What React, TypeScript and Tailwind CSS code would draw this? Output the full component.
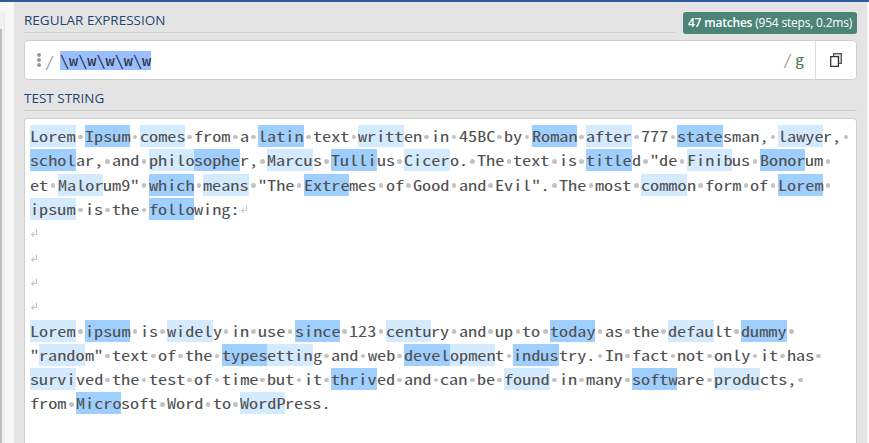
const CELL = 9.12;

// [..] marks a light match and {..} marks a dark match; ~ is a line break mark.
const lines: string[] = [
  '[Lorem] {Ipsum} [comes] from a {latin} text [writt]en in 45BC by {Roman} [after] 777 {state}sman, [lawye]r, ',
  '{schol}ar, and [philo]{sophe}r, [Marcu]s {Tulli}us [Cicer]o. The text is {title}d "de [Finib]us {Bonor}um ',
  'et [Malor]um9" {which} [means] "The {Extre}mes of Good and Evil". The most [commo]n form of {Lorem} ',
  '[ipsum] is the {follo}wing:~',
  '~',
  '~',
  '~',
  '~',
  '[Lorem] {ipsum} is [widel]y in use {since} 123 [centu]ry and up to {today} as the [defau]lt {dummy} ',
  '"[rando]m" text of the {types}[ettin]g and web {devel}[opmen]t {indus}try. In fact not only it has ',
  '[survi]ved the test of time but it {thriv}ed and can be [found] in many {softw}are [produ]cts, ',
  'from {Micro}soft Word to [WordP]ress.',
];

// The face is half an em wide, so the glyphs are widened to fill a cell.
function Wide({ children }: { children: string }) {
  return <span className="inline-block origin-left scale-x-[1.258]">{children}</span>;
}

function Segment({ token }: { token: string }) {
  if (token === ' ') {
    return (
      <span className="flex h-[22px] shrink-0 items-center justify-center pt-[2px]" style={{ width: CELL }}>
        <span className="size-[4.6px] rounded-full bg-[#c2c2c2]" />
      </span>
    );
  }
  if (token === '~') {
    return (
      <svg className="mt-[7px] ml-px h-[9px] w-[7px]" viewBox="0 0 7 9" fill="none">
        <path d="M5.5 0.5V5.5H0.5" stroke="#a9cdda" />
        <path d="M2.8 3L0.5 5.5L2.8 8" stroke="#c4c4c4" />
      </svg>
    );
  }
  const light = token[0] === '[';
  const dark = token[0] === '{';
  const text = light || dark ? token.slice(1, -1) : token;
  const fill = light ? 'bg-[#d4eaff]' : dark ? 'bg-[#9fcfff]' : '';
  return (
    <span className={`h-[22px] shrink-0 leading-[21px] ${fill}`} style={{ width: text.length * CELL }}>
      <Wide>{text}</Wide>
    </span>
  );
}

function Row({ line }: { line: string }) {
  const tokens = line.match(/\[[^\]]+\]|\{[^}]+\}| |~|[^[{ ~]+/g) ?? [];
  return (
    <div className="flex h-[24.32px] whitespace-pre">
      {tokens.map((token, i) => (
        <Segment key={i} token={token} />
      ))}
    </div>
  );
}

const mono = "font-['Noto_Sans_Mono_CJK_SC','Liberation_Mono',monospace] text-[14.5px]";

export default function App() {
  return (
    <div className="flex h-[443px] w-[869px] flex-col overflow-hidden bg-[#f7f7f7] font-['Open_Sans',sans-serif]">
      <div className="h-[2px] shrink-0 bg-[#2c5b9b]" />
      <div className="flex min-h-0 flex-1">
        <aside className="w-[14px] shrink-0 pt-[10px]">
          <div className="h-full w-[5px] rounded-tr-[4px] border-r border-[#e8e8e8] bg-[#f0f0f0] pt-[17px]">
            <div className="h-full w-[2px] bg-[#bdbdbd]" />
          </div>
        </aside>
        <main className="flex w-[853px] shrink-0 flex-col bg-[#e4e4e4] pr-[10px] pl-[10px]">
          <div className="flex h-[38px] shrink-0 justify-between">
            <h2 className="h-[31px] w-[651px] border-b border-[#cfcfcf] text-[13.5px] leading-[37px] font-medium text-[#24456f]">
              REGULAR EXPRESSION
            </h2>
            <div className="mt-[10px] flex h-[22px] w-[174px] items-center justify-center rounded-[3px] bg-[#4c8577] text-[12px] tracking-[-0.2px] whitespace-pre text-white">
              <span className="font-semibold">47 matches</span> (954 steps, 0.2ms)
            </div>
          </div>
          <section className="flex h-[40px] shrink-0 rounded-[4px] border border-[#cfcfcf] bg-white">
            <div className="flex flex-1 items-center">
              <div className="ml-[12px] flex flex-col gap-px">
                <span className="size-[4px] rounded-full bg-[#999]" />
                <span className="size-[4px] rounded-full bg-[#999]" />
                <span className="size-[4px] rounded-full bg-[#999]" />
              </div>
              <span className={`ml-[4px] w-[9px] leading-[15px] text-[#999] ${mono}`}>
                <Wide>/</Wide>
              </span>
              <span className={`ml-[6px] h-[19px] w-[91px] bg-[#99bfff] leading-[17px] text-[#2c2c38] ${mono}`}>
                <Wide>{'\\w\\w\\w\\w\\w'}</Wide>
              </span>
              <span className={`mr-[11px] ml-auto flex gap-[3px] pb-[2px] leading-[18px] ${mono}`}>
                <span className="w-[9.12px] text-[#999]">
                  <Wide>/</Wide>
                </span>
                <span className="w-[9.12px] text-[#4c7a50]">
                  <Wide>g</Wide>
                </span>
              </span>
            </div>
            <div className="flex w-[41px] items-center justify-center border-l border-[#dcdcdc]">
              <svg className="h-[14px] w-[12px] shrink-0" viewBox="0 0 12 14" fill="none" strokeWidth="1.3">
                <path d="M3.6 0.7H11.3V10.3H3.6Z" fill="#ddd" stroke="#555" />
                <path d="M0.7 3.7H8.4V13.3H0.7Z" fill="#fff" stroke="#333" />
              </svg>
            </div>
          </section>
          <h2 className="h-[31px] shrink-0 border-b border-[#cfcfcf] text-[13.5px] leading-[37px] font-medium text-[#24456f]">
            TEST STRING
          </h2>
          <section className="mt-[7px] flex-1 rounded-t-[4px] border border-b-0 border-[#cfcfcf] bg-white">
            <div className={`pt-[6px] pl-[5.2px] text-[#505050] ${mono}`}>
              {lines.map((line, i) => (
                <Row key={i} line={line} />
              ))}
            </div>
          </section>
        </main>
      </div>
    </div>
  );
}
